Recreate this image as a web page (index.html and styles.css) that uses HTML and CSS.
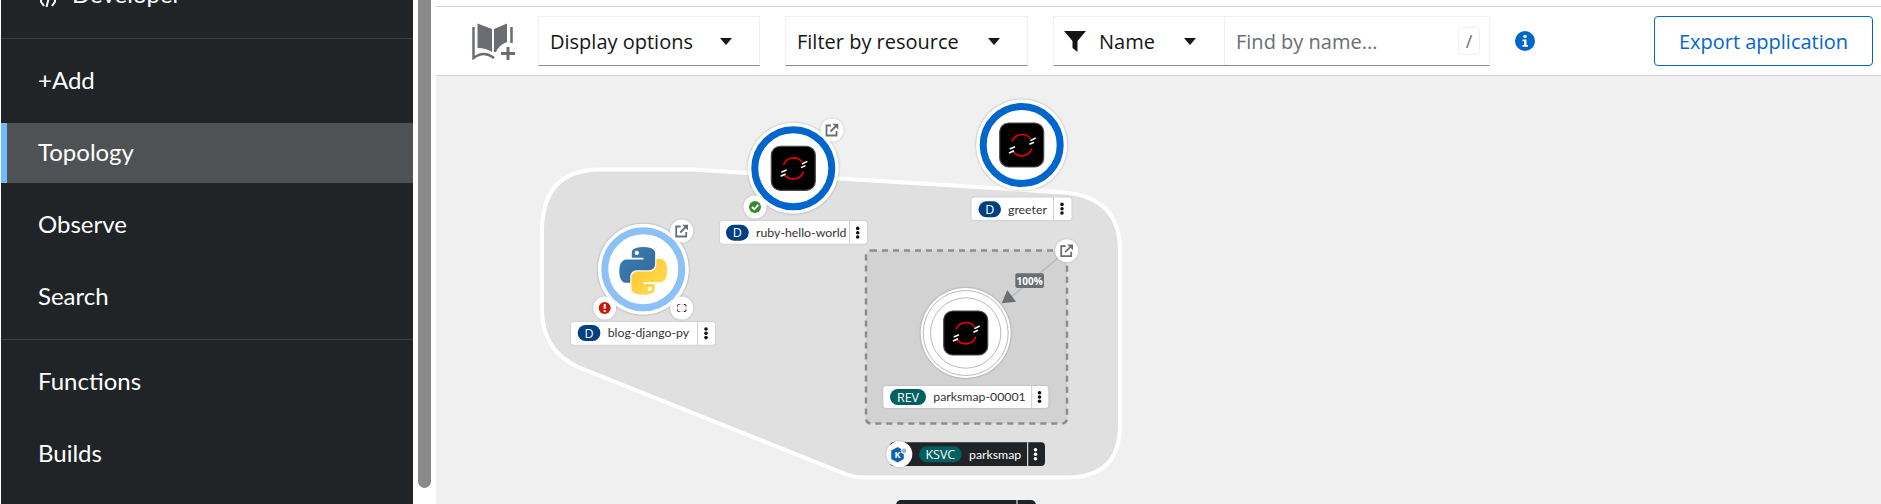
FILE: index.html
```html
<!DOCTYPE html>
<html>
<head>
<meta charset="utf-8">
<title>Topology</title>
<link rel="stylesheet" href="styles.css">
</head>
<body>
<div class="page">
  <nav class="sidebar">
    <div class="perspective">
      <svg class="perspective-icon" viewBox="0 0 16 12" width="16" height="12"><path d="M4 1 L0.5 6 L4 11 M12 1 L15.5 6 L12 11 M9.5 0 L6.5 12" fill="none" stroke="#fff" stroke-width="2"/></svg>
      <span>Developer</span>
    </div>
    <div class="nav-group">
      <a class="nav-item">+Add</a>
      <a class="nav-item active">Topology</a>
      <a class="nav-item">Observe</a>
      <a class="nav-item">Search</a>
    </div>
    <div class="nav-group">
      <a class="nav-item">Functions</a>
      <a class="nav-item">Builds</a>
    </div>
  </nav>
  <div class="scroll-track"><div class="scroll-thumb"></div></div>
  <main class="main">
    <div class="top-strip"></div>
    <div class="toolbar">
      <svg class="book" viewBox="472 18 43 37" width="43" height="37">
        <path d="M477.500 18.500 L492 24 V47 Q486 43 477.500 43 Z M494 24 L507 18.500 V37 Q499 40 496 47 L494 47 Z" fill="#6a6e73"/>
        <path d="M473.500 22 V53 Q484 45 494 53 M511.500 22 V38" fill="none" stroke="#6a6e73" stroke-width="2.500"/>
        <path d="M501 48.500 H515 M508 42 V55" fill="none" stroke="#6a6e73" stroke-width="3"/>
      </svg>
      <div class="select select-display">Display options<i class="caret"></i></div>
      <div class="select select-filter">Filter by resource<i class="caret"></i></div>
      <div class="search">
        <div class="search-type">
          <svg class="funnel" viewBox="0 0 22 21" width="22" height="21"><path d="M0 0 H22 L13.500 10 V21 L8.500 17 V10 Z" fill="#151515"/></svg>
          <span>Name</span><i class="caret"></i>
        </div>
        <div class="search-input">
          <span class="placeholder">Find by name...</span>
          <span class="shortcut">/</span>
        </div>
      </div>
      <svg class="info" viewBox="0 0 20 20" width="20" height="20">
        <circle cx="10" cy="10" r="10" fill="#06c"/>
        <circle cx="10" cy="5.500" r="1.800" fill="#fff"/>
        <path d="M7.500 8.500 H11.500 V14 H13 V15.800 H7.500 V14 H9 V10.300 H7.500 Z" fill="#fff"/>
      </svg>
      <button class="export">Export application</button>
    </div>
    <svg class="canvas" viewBox="436 76 1445 428" width="1445" height="428">
      <defs>
        <symbol id="openshift" viewBox="-23 -23 46 46" overflow="visible">
          <rect x="-22" y="-22" width="44" height="44" rx="9" fill="#000" stroke="#4a4a4a" stroke-width="1.200"/>
          <path d="M9 -6 A10.800 10.800 0 0 0 -9.800 -3.500 M-9 6 A10.800 10.800 0 0 0 10.200 3.500" fill="none" stroke="#e00" stroke-width="1.600"/>
          <path d="M8.700 -4.300 L14 -7 M7.700 -0.700 L12.300 -2.700 M-12 4 L-6.700 1.700 M-12.700 8 L-7.700 5.700" stroke="#fff" stroke-width="1.500"/>
        </symbol>
        <g id="ext-link">
          <circle r="11.500" class="badge"/>
          <path d="M-1 -4.500 H-5.500 V5.500 H4.500 V1 M-1.500 1.500 L5 -5" fill="none" stroke="#6a6e73" stroke-width="1.800"/>
          <path d="M0.500 -6.300 H6.300 V-0.500 Z" fill="#6a6e73"/>
        </g>
        <g id="kebab">
          <circle cy="-4.300" r="1.800" fill="#151515"/>
          <circle r="1.800" fill="#151515"/>
          <circle cy="4.300" r="1.800" fill="#151515"/>
        </g>
        <linearGradient id="py-blue" x1="0" y1="0" x2="1" y2="1">
          <stop offset="0" stop-color="#387eb8"/>
          <stop offset="1" stop-color="#366994"/>
        </linearGradient>
        <linearGradient id="py-yellow" x1="0" y1="0" x2="1" y2="1">
          <stop offset="0" stop-color="#ffe052"/>
          <stop offset="1" stop-color="#ffc331"/>
        </linearGradient>
      </defs>

      <path class="group" d="M600 169.500 L693 169.500 L1065 192.500 Q1120 198 1120 250 L1120 425 Q1120 477.500 1067 477.500 L865 477.500 Q853 477.500 843 473 L578 367 Q542 350 542 310 L542 232 Q542 169.500 600 169.500 Z"/>

      <!-- greeter -->
      <g transform="translate(1021.700 145)">
        <circle r="45.500" class="node-bg"/>
        <circle r="38.500" class="ring ring-dark"/>
        <use href="#openshift" x="-23" y="-23" width="46" height="46"/>
      </g>
      <rect x="971.500" y="197.500" width="100" height="22.500" rx="3" class="label-bg"/>
      <line x1="1053.500" y1="197.500" x2="1053.500" y2="220" class="label-div"/>
      <rect x="978.500" y="201.300" width="22.500" height="16" rx="8" class="pill-d"/>
      <text x="989.700" y="214" class="pill-text">D</text>
      <text x="1008" y="213.500" class="label-text">greeter</text>
      <use href="#kebab" x="1062" y="208.700"/>

      <!-- ruby-hello-world -->
      <g transform="translate(793.300 168.300)">
        <circle r="45.500" class="node-bg"/>
        <circle r="38.500" class="ring ring-dark"/>
        <use href="#openshift" x="-23" y="-23" width="46" height="46"/>
      </g>
      <use href="#ext-link" x="832" y="130"/>
      <circle cx="755" cy="207" r="11.500" class="badge"/>
      <circle cx="755" cy="207" r="6" fill="#3e8635"/>
      <path d="M752 207 L754.300 209.300 L758.300 204.800" fill="none" stroke="#fff" stroke-width="1.800"/>
      <rect x="720" y="221" width="147" height="22.700" rx="3" class="label-bg"/>
      <line x1="849.500" y1="221" x2="849.500" y2="243.700" class="label-div"/>
      <rect x="726" y="224.700" width="22.700" height="16" rx="8" class="pill-d"/>
      <text x="737.300" y="237.300" class="pill-text">D</text>
      <text x="756" y="237" class="label-text">ruby-hello-world</text>
      <use href="#kebab" x="857.700" y="232.700"/>

      <!-- blog-django-py -->
      <g transform="translate(643.300 269.300)">
        <circle r="45.500" class="node-bg"/>
        <circle r="38.500" class="ring ring-light"/>
      </g>
      <g transform="translate(619.300 246.700) scale(0.436)">
        <path fill="url(#py-blue)" fill-rule="evenodd" d="M54.900 0.900 C26.900 0.900 28.600 13 28.600 13 L28.630 25.600 H55.300 V29.400 H18 S0 27.300 0 55.600 C0 83.900 15.700 82.900 15.700 82.900 H25.100 V69.800 S24.600 54.100 40.600 54.100 H67.200 S82.200 54.300 82.200 39.600 V15.200 S84.500 0.900 54.900 0.900 Z M40.100 9.400 C42.800 9.400 44.900 11.600 44.900 14.200 S42.700 19 40.100 19 35.300 16.800 35.300 14.200 37.500 9.400 40.100 9.400 Z"/>
        <path transform="rotate(180 55 55.500)" fill="url(#py-yellow)" fill-rule="evenodd" d="M54.900 0.900 C26.900 0.900 28.600 13 28.600 13 L28.630 25.600 H55.300 V29.400 H18 S0 27.300 0 55.600 C0 83.900 15.700 82.900 15.700 82.900 H25.100 V69.800 S24.600 54.100 40.600 54.100 H67.200 S82.200 54.300 82.200 39.600 V15.200 S84.500 0.900 54.900 0.900 Z M40.100 9.400 C42.800 9.400 44.900 11.600 44.900 14.200 S42.700 19 40.100 19 35.300 16.800 35.300 14.200 37.500 9.400 40.100 9.400 Z"/>
      </g>
      <use href="#ext-link" x="681.700" y="231"/>
      <circle cx="604.700" cy="308" r="11.500" class="badge"/>
      <circle cx="604.700" cy="308" r="6" fill="#c9190b"/>
      <path d="M604.700 304 V308.800 M604.700 310.300 V312" stroke="#fff" stroke-width="2"/>
      <circle cx="681.700" cy="308" r="11.500" class="badge"/>
      <rect x="677.500" y="304.500" width="8.500" height="7" rx="1.500" fill="#fdf0f0" stroke="#e4d4d4" stroke-width="1"/>
      <path d="M677.500 306.500 V305.500 Q677.500 304.500 678.500 304.500 H679.500 M684 304.500 H685 Q686 304.500 686 305.500 V306.500 M686 309.500 V310.500 Q686 311.500 685 311.500 H684 M679.500 311.500 H678.500 Q677.500 311.500 677.500 310.500 V309.500" fill="none" stroke="#222" stroke-width="1"/>
      <rect x="571" y="322" width="144" height="22.700" rx="3" class="label-bg"/>
      <line x1="697.500" y1="322" x2="697.500" y2="344.700" class="label-div"/>
      <rect x="577.700" y="325" width="22.700" height="16" rx="8" class="pill-d"/>
      <text x="589" y="337.600" class="pill-text">D</text>
      <text x="607.700" y="337.300" class="label-text">blog-django-py</text>
      <use href="#kebab" x="706" y="333.300"/>

      <!-- revision -->
      <rect x="866" y="250.500" width="201" height="173" rx="5" class="rev-box"/>
      <line x1="1066.700" y1="250.700" x2="1010" y2="298" class="traffic"/>
      <path d="M1001.700 303.300 L1007.300 290 L1016 301.700 Z" fill="#6a6e73"/>
      <rect x="1015.300" y="273.300" width="28.700" height="14.700" rx="2" fill="#6a6e73"/>
      <text x="1029.700" y="284.600" class="percent">100%</text>
      <g transform="translate(965.700 333)">
        <circle r="45" class="node-bg"/>
        <circle r="42.500" class="thin-ring"/>
        <circle r="35.200" class="thin-ring"/>
        <use href="#openshift" x="-23" y="-23" width="46" height="46"/>
      </g>
      <use href="#ext-link" x="1066.700" y="250.700"/>
      <rect x="883.300" y="386" width="165" height="22" rx="3" class="label-bg"/>
      <line x1="1031.700" y1="386" x2="1031.700" y2="408" class="label-div"/>
      <rect x="890" y="389" width="36" height="16" rx="8" class="pill-rev"/>
      <text x="908" y="401.600" class="pill-text">REV</text>
      <text x="933.300" y="401.400" class="label-text">parksmap-00001</text>
      <use href="#kebab" x="1039.500" y="397"/>

      <!-- knative service -->
      <rect x="890" y="442.300" width="155" height="23.700" rx="4" class="label-dark"/>
      <line x1="1027.700" y1="442.300" x2="1027.700" y2="466" stroke="#fff"/>
      <rect x="919" y="446.300" width="42.700" height="16" rx="8" class="pill-rev"/>
      <text x="940.300" y="458.900" class="pill-text">KSVC</text>
      <text x="969" y="458.900" class="label-text-light">parksmap</text>
      <circle cx="1035.500" cy="449.700" r="1.800" fill="#fff"/>
      <circle cx="1035.500" cy="454.200" r="1.800" fill="#fff"/>
      <circle cx="1035.500" cy="458.700" r="1.800" fill="#fff"/>
      <circle cx="899.300" cy="454.300" r="13" class="badge"/>
      <path d="M897.700 448 L903 451 V458.500 L897.700 461.500 L892 458.500 V451 Z" fill="#0f62b0" stroke="#0f62b0" stroke-width="1.500" stroke-linejoin="round"/>
      <circle cx="904" cy="450.700" r="2.800" fill="#8fb0e0" stroke="#fff"/>
      <text x="897.500" y="458.400" class="k-text">K</text>

      <!-- next group label, cut by the window -->
      <rect x="896" y="500" width="140" height="20" rx="5" class="label-dark"/>
      <line x1="1017" y1="500" x2="1017" y2="504" stroke="#fff"/>
    </svg>
  </main>
</div>
</body>
</html>
```

FILE: styles.css
```css
* {
  box-sizing: border-box;
  margin: 0;
  padding: 0;
}
html, body {
  height: 504px;
  overflow: hidden;
  background: #fff;
}
.page {
  display: flex;
  height: 504px;
  padding-left: 1px;
}

/* sidebar */
.sidebar {
  width: 412px;
  flex: none;
  background: #212427;
  color: #fff;
  font-family: "Lato", "Noto Sans", sans-serif;
  font-size: 24px;
}
.perspective {
  height: 39px;
  border-bottom: 1px solid #3c3f42;
  display: flex;
  align-items: flex-end;
  gap: 16px;
  padding: 0 0 31px 39px;
  line-height: 26px;
}
.nav-group {
  display: flex;
  flex-direction: column;
  gap: 12px;
  padding: 12px 0;
}
.nav-group + .nav-group {
  border-top: 1px solid #3c3f42;
}
.nav-item {
  height: 60px;
  display: flex;
  align-items: center;
  padding: 0 0 3px 37px;
}
.nav-item.active {
  background: #4f5255;
  border-left: 6px solid #73bcf7;
  padding-left: 31px;
}
.scroll-track {
  width: 23px;
  flex: none;
  padding: 0 5px;
}
.scroll-thumb {
  height: 488px;
  background: #8a8a8a;
  border-radius: 0 0 7px 7px;
}

/* toolbar */
.main {
  flex: 1;
  min-width: 0;
  display: flex;
  flex-direction: column;
  font-family: "Open Sans", "Noto Sans", sans-serif;
  font-size: 20px;
  color: #151515;
}
.top-strip {
  height: 7px;
  flex: none;
  border-bottom: 1px solid #d2d2d2;
}
.toolbar {
  height: 69px;
  flex: none;
  display: flex;
  align-items: center;
  padding: 0 8px 0 36px;
  border-bottom: 1px solid #d2d2d2;
}
.book {
  flex: none;
  margin-right: 23px;
}
.select {
  height: 50px;
  display: flex;
  align-items: center;
  justify-content: space-between;
  padding: 0 27px 0 11px;
  border: 1px solid #f0f0f0;
  border-bottom-color: #8a8d90;
}
.select-display {
  width: 222px;
  margin-right: 25px;
}
.select-filter {
  width: 243px;
  margin-right: 25px;
}
.caret {
  width: 0;
  height: 0;
  border-left: 6.500px solid transparent;
  border-right: 6.500px solid transparent;
  border-top: 7.500px solid #151515;
}
.search {
  width: 437px;
  height: 50px;
  display: flex;
  border: 1px solid #f0f0f0;
  border-bottom-color: #8a8d90;
}
.search-type {
  width: 171px;
  display: flex;
  align-items: center;
  padding: 0 28px 0 10px;
  border-right: 1px solid #f0f0f0;
}
.funnel {
  margin-right: 13px;
}
.search-type .caret {
  margin-left: auto;
}
.search-input {
  flex: 1;
  display: flex;
  align-items: center;
  justify-content: space-between;
  padding: 0 9px 0 11px;
}
.placeholder {
  color: #6a6e73;
}
.shortcut {
  width: 22px;
  height: 28px;
  border: 1px solid #f0f0f0;
  border-radius: 4px;
  color: #6a6e73;
  font-size: 18px;
  line-height: 26px;
  text-align: center;
}
.info {
  flex: none;
  margin-left: 25px;
}
.export {
  margin-left: auto;
  width: 219px;
  height: 50px;
  background: #fff;
  border: 1px solid #06c;
  border-radius: 4px;
  color: #06c;
  font-family: inherit;
  font-size: 20px;
}

/* topology */
.canvas {
  display: block;
  flex: none;
  background: #f0f0f0;
}
.group {
  fill: #e0e0e0;
  stroke: #fff;
  stroke-width: 4;
}
.node-bg {
  fill: #fff;
  filter: drop-shadow(0 0 1px rgba(0, 0, 0, 0.3));
}
.badge {
  fill: #fff;
  filter: drop-shadow(0 0 1px rgba(0, 0, 0, 0.2));
}
.ring {
  fill: none;
  stroke-width: 7;
}
.ring-dark {
  stroke: #06c;
}
.ring-light {
  stroke: #8bc1f7;
}
.thin-ring {
  fill: none;
  stroke: #b8bbbe;
  stroke-width: 1;
}
.label-bg {
  fill: #fff;
  filter: drop-shadow(0 0 1px rgba(0, 0, 0, 0.15));
}
.label-dark {
  fill: #212427;
}
.label-div {
  stroke: #d2d2d2;
  stroke-width: 1;
}
.pill-d {
  fill: #004080;
}
.pill-rev {
  fill: #005f60;
}
.pill-text {
  fill: #fff;
  font-family: "Open Sans", sans-serif;
  font-size: 12.500px;
  text-anchor: middle;
}
.label-text, .label-text-light {
  font-family: "Lato", "Open Sans", sans-serif;
  font-size: 12.300px;
}
.label-text {
  fill: #333;
}
.label-text-light {
  fill: #fff;
}
.rev-box {
  fill: #d2d2d2;
  stroke: #8a8d90;
  stroke-width: 2.500;
  stroke-dasharray: 6 5;
}
.traffic {
  stroke: #b8bbbe;
  stroke-width: 1.500;
}
.percent {
  fill: #fff;
  font-family: "Open Sans", sans-serif;
  font-size: 10px;
  font-weight: 700;
  text-anchor: middle;
}
.k-text {
  fill: #fff;
  font-family: "Open Sans", sans-serif;
  font-size: 9px;
  font-weight: 700;
  text-anchor: middle;
}
```
